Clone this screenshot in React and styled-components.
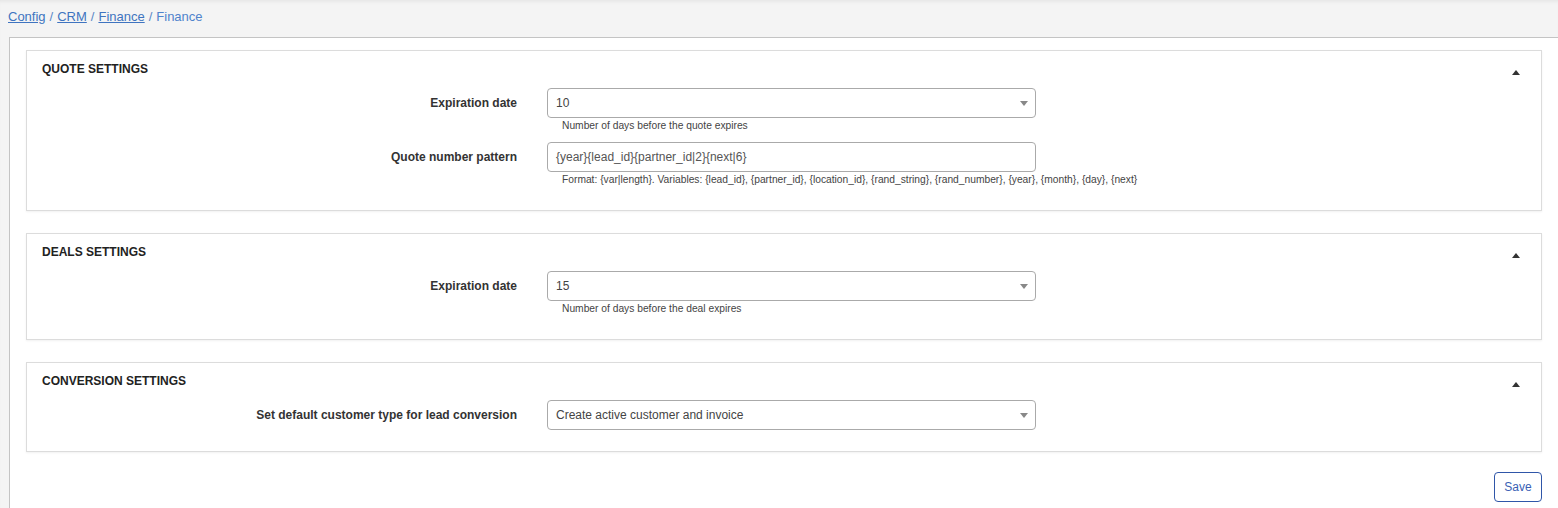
import React from 'react';
import styled, { createGlobalStyle } from 'styled-components';

const GlobalStyle = createGlobalStyle`
	html, body {
		margin: 0;
		padding: 0;
		background: #f4f4f4;
		font-family: "Liberation Sans", Arial, sans-serif;
		color: #333;
	}
`;

const Page = styled.div`
	min-height: 508px;
	background: #f4f4f4;
	box-shadow: inset 0 4px 4px -3px rgba(0, 0, 0, 0.08);
`;

const Breadcrumbs = styled.nav`
	height: 37px;
	padding: 0 8px 5px;
	display: flex;
	align-items: center;
	box-sizing: border-box;
	font-size: 13px;
	color: #4a7fc6;
`;

const Crumb = styled.a`
	color: #3f74c0;
	text-decoration: underline;
	cursor: pointer;
`;

const Sep = styled.span`
	margin: 0 4px;
	color: #5a87c6;
`;

const Current = styled.span`
	color: #4f83cc;
`;

const Content = styled.div`
	margin-left: 9px;
	background: #fff;
	border-left: 1px solid #c4c4c4;
	border-top: 1px solid #c4c4c4;
	padding: 12px 16px 8px;
	min-height: 460px;
	box-sizing: border-box;
`;

const Panel = styled.section`
	background: #fff;
	border: 1px solid #dcdcdc;
	box-shadow: 0 1px 2px rgba(0, 0, 0, 0.06);
	padding: 0 0 ${props => (props.$compact ? '21px' : '23px')};
	margin-bottom: ${props => (props.$compact ? '20px' : '22px')};
`;

const PanelHeader = styled.div`
	display: flex;
	align-items: center;
	justify-content: space-between;
	padding: 11px 21px 0 15px;
	height: 15px;
	margin-bottom: 11px;
`;

const PanelTitle = styled.h4`
	margin: 0;
	font-size: 12px;
	line-height: 15px;
	font-weight: bold;
	text-transform: uppercase;
	color: #222;
`;

const Caret = styled.span`
	width: 0;
	height: 0;
	margin-top: 5px;
	border-left: 4px solid transparent;
	border-right: 4px solid transparent;
	border-bottom: 5px solid #333;
`;

const Form = styled.div`
	display: flex;
	flex-direction: column;
	gap: 9px;
`;

const Row = styled.div`
	display: grid;
	grid-template-columns: 490px 489px;
	column-gap: 30px;
`;

const Label = styled.label`
	height: 30px;
	display: flex;
	align-items: center;
	justify-content: flex-end;
	font-size: 12px;
	font-weight: bold;
	color: #333;
`;

const Field = styled.div`
	display: flex;
	flex-direction: column;
`;

const Box = styled.div`
	height: 30px;
	box-sizing: border-box;
	border: 1px solid #aaa;
	border-radius: 4px;
	display: flex;
	align-items: center;
	justify-content: space-between;
	padding: 0 6px 0 8px;
	font-size: 12px;
	color: ${props => (props.$select ? '#444' : '#555')};
	background: #fff;
`;

const Arrow = styled.span`
	width: 0;
	height: 0;
	border-left: 4px solid transparent;
	border-right: 4px solid transparent;
	border-top: 5px solid #888;
	margin-right: 1px;
`;

const Help = styled.div`
	margin-top: 1px;
	padding-left: 15px;
	font-size: 10.25px;
	line-height: 14px;
	color: #444;
	white-space: nowrap;
`;

const Footer = styled.div`
	display: flex;
	justify-content: flex-end;
`;

const SaveButton = styled.button`
	height: 30px;
	width: 48px;
	padding: 0;
	border: 1px solid #2f56a8;
	border-radius: 4px;
	background: #fff;
	color: #3a5fb4;
	font-family: "Liberation Sans", Arial, sans-serif;
	font-size: 12px;
	cursor: pointer;
`;

const sections = [
	{
		title: 'Quote settings',
		rows: [
			{
				label: 'Expiration date',
				value: '10',
				select: true,
				help: 'Number of days before the quote expires',
			},
			{
				label: 'Quote number pattern',
				value: '{year}{lead_id}{partner_id|2}{next|6}',
				help:
					'Format: {var|length}. Variables: {lead_id}, {partner_id}, {location_id}, {rand_string}, {rand_number}, {year}, {month}, {day}, {next}',
			},
		],
	},
	{
		title: 'Deals settings',
		rows: [
			{
				label: 'Expiration date',
				value: '15',
				select: true,
				help: 'Number of days before the deal expires',
			},
		],
	},
	{
		title: 'Conversion settings',
		rows: [
			{
				label: 'Set default customer type for lead conversion',
				value: 'Create active customer and invoice',
				select: true,
			},
		],
	},
];

export default function App() {
	return (
		<Page>
			<GlobalStyle />
			<Breadcrumbs>
				<Crumb>Config</Crumb>
				<Sep>/</Sep>
				<Crumb>CRM</Crumb>
				<Sep>/</Sep>
				<Crumb>Finance</Crumb>
				<Sep>/</Sep>
				<Current>Finance</Current>
			</Breadcrumbs>
			<Content>
				{sections.map(section => {
					const last = section.rows[section.rows.length - 1];
					return (
						<Panel key={section.title} $compact={!last.help}>
							<PanelHeader>
								<PanelTitle>{section.title}</PanelTitle>
								<Caret />
							</PanelHeader>
							<Form>
								{section.rows.map(row => (
									<Row key={row.label}>
										<Label>{row.label}</Label>
										<Field>
											<Box $select={row.select}>
												<span>{row.value}</span>
												{row.select && <Arrow />}
											</Box>
											{row.help && <Help>{row.help}</Help>}
										</Field>
									</Row>
								))}
							</Form>
						</Panel>
					);
				})}
				<Footer>
					<SaveButton>Save</SaveButton>
				</Footer>
			</Content>
		</Page>
	);
}
